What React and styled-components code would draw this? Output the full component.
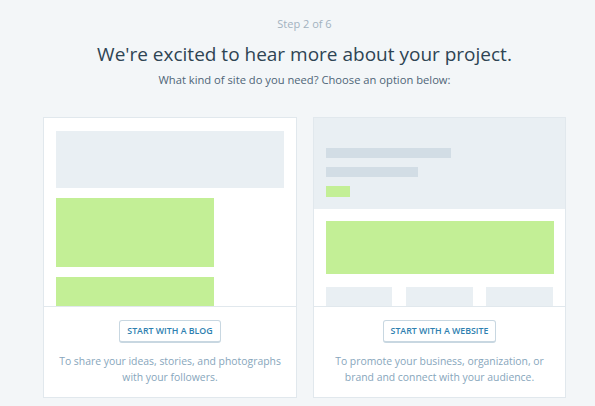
import React from "react";
import styled, { createGlobalStyle } from "styled-components";

const Global = createGlobalStyle`
  html, body { margin: 0; padding: 0; background: #f3f6f8; }
  body { font-family: "Open Sans", "Noto Sans", sans-serif; }
  * { box-sizing: border-box; }
`;

const Page = styled.div`
  width: 595px;
  height: 406px;
  overflow: hidden;
  background: #f3f6f8;
  padding: 16px 0 0 43px;
`;

const Header = styled.header`
  width: 523px;
  text-align: center;
`;

const Step = styled.div`
  font-size: 11px;
  line-height: 16px;
  color: #a2b2bf;
`;

const Title = styled.h1`
  margin: 8px 0 0;
  font-size: 19px;
  font-weight: 400;
  line-height: 28px;
  color: #2e4453;
`;

const Subtitle = styled.p`
  margin: 4px 0 0;
  font-size: 11.2px;
  line-height: 16px;
  color: #4f6577;
`;

const Cards = styled.div`
  display: flex;
  gap: 16px;
  margin-top: 29px;
  width: 523px;
`;

const Card = styled.div`
  width: ${(p) => p.$w}px;
  height: 281px;
  background: #fff;
  border: 1px solid #e1e8ed;
  display: flex;
  flex-direction: column;
`;

const Preview = styled.div`
  flex: none;
  height: 189px;
  overflow: hidden;
  border-bottom: 1px solid #e1e8ed;
  display: flex;
  flex-direction: column;
`;

const BlogPreview = styled(Preview)`
  padding: 13px 12px 0 12px;
  gap: 10px;
`;

const Block = styled.div`
  flex: none;
  width: ${(p) => p.$w}px;
  height: ${(p) => p.$h}px;
  background: ${(p) => p.$c};
`;

const Hero = styled.div`
  flex: none;
  height: 91px;
  background: #e9eff3;
  padding: 30px 12px 0;
  display: flex;
  flex-direction: column;
  gap: 9px;
`;

const Body = styled.div`
  padding: 12px 12px 0;
  display: flex;
  flex-direction: column;
  gap: 13px;
`;

const Tiles = styled.div`
  display: flex;
  justify-content: space-between;
`;

const Footer = styled.div`
  flex: 1;
  display: flex;
  flex-direction: column;
  align-items: center;
  padding-top: 13px;
`;

const Button = styled.button`
  height: 23px;
  padding: 0 7px;
  background: #fff;
  border: 1px solid #c8d7e1;
  border-bottom-width: 2px;
  border-radius: 3px;
  font-family: "Open Sans", "Noto Sans", sans-serif;
  font-size: 8.8px;
  font-weight: 600;
  color: #2e7fb0;
  text-transform: uppercase;
`;

const Desc = styled.p`
  margin: 10px 0 0;
  font-size: 10.4px;
  line-height: 16px;
  color: #87a6bc;
  text-align: center;
`;

const GREEN = "#c3ef96";
const LIGHT = "#e9eff3";
const BAR = "#d2dde5";

export default function App() {
  return (
    <>
      <Global />
      <Page>
        <Header>
          <Step>Step 2 of 6</Step>
          <Title>We're excited to hear more about your project.</Title>
          <Subtitle>What kind of site do you need? Choose an option below:</Subtitle>
        </Header>
        <Cards>
          <Card $w={254}>
            <BlogPreview>
              <Block $w={228} $h={57} $c={LIGHT} />
              <Block $w={158} $h={69} $c={GREEN} />
              <Block $w={158} $h={69} $c={GREEN} />
            </BlogPreview>
            <Footer>
              <Button>Start with a blog</Button>
              <Desc>
                To share your ideas, stories, and photographs
                <br />
                with your followers.
              </Desc>
            </Footer>
          </Card>
          <Card $w={253}>
            <Preview>
              <Hero>
                <Block $w={125} $h={10} $c={BAR} />
                <Block $w={92} $h={10} $c={BAR} />
                <Block $w={24} $h={11} $c={GREEN} />
              </Hero>
              <Body>
                <Block $w={228} $h={53} $c={GREEN} />
                <Tiles>
                  <Block $w={66} $h={20} $c={LIGHT} />
                  <Block $w={67} $h={20} $c={LIGHT} />
                  <Block $w={67} $h={20} $c={LIGHT} />
                </Tiles>
              </Body>
            </Preview>
            <Footer>
              <Button>Start with a website</Button>
              <Desc>
                To promote your business, organization, or
                <br />
                brand and connect with your audience.
              </Desc>
            </Footer>
          </Card>
        </Cards>
      </Page>
    </>
  );
}
